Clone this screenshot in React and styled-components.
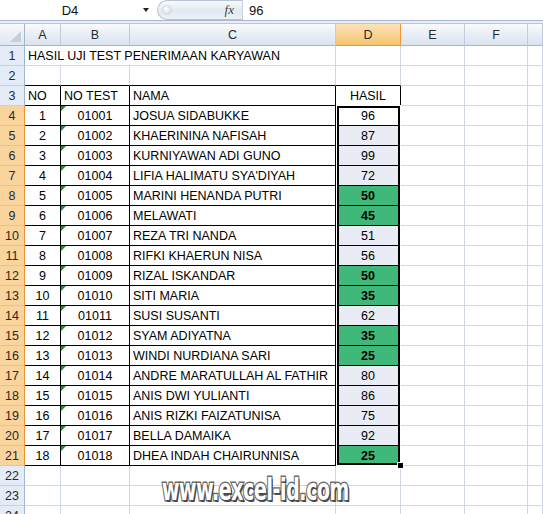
import React from 'react';
import styled, { createGlobalStyle, css } from 'styled-components';

const GlobalStyle = createGlobalStyle`
  html, body { margin: 0; padding: 0; background: #fff; }
  body { font-family: "Liberation Sans", Arial, sans-serif; }
`;

const Window = styled.div`
  position: relative;
  width: 543px;
  height: 514px;
  overflow: hidden;
  background: #fff;
  display: flex;
  flex-direction: column;
  & > * { flex-shrink: 0; }
`;

const FormulaBar = styled.div`
  height: 20px;
  display: flex;
  align-items: stretch;
  background: #fff;
  border-bottom: 1px solid #a9b8cc;
`;

const NameBox = styled.div`
  width: 140px;
  display: flex;
  align-items: center;
  justify-content: center;
  font-size: 13px;
  color: #111;
`;

const DropArrow = styled.div`
  width: 16px;
  display: flex;
  align-items: center;
  justify-content: flex-start;
  &::after {
    content: '';
    margin-left: 3px;
    border-style: solid;
    border-width: 4px 3.5px 0 3.5px;
    border-color: #222 transparent transparent transparent;
  }
`;

const FxPill = styled.div`
  width: 85px;
  margin-left: 1px;
  box-sizing: border-box;
  display: flex;
  align-items: center;
  justify-content: space-between;
  padding: 0 8px 0 4px;
  border-radius: 11px 0 0 11px;
  border: 1px solid #b4c3d6;
  border-right: none;
  background: linear-gradient(#f7f9fc, #e3e9f1 55%, #eef2f7);
`;

const Knob = styled.span`
  width: 8px;
  height: 8px;
  border-radius: 50%;
  background: radial-gradient(circle at 40% 35%, #fff, #c9d3df);
  border: 1px solid #d2dae4;
`;

const Fx = styled.span`
  font-family: "Liberation Serif", "Times New Roman", serif;
  font-style: italic;
  font-size: 13px;
  color: #444;
`;

const FormulaText = styled.div`
  flex: 1;
  display: flex;
  align-items: center;
  padding-left: 6px;
  font-size: 13px;
  color: #111;
  border-left: 1px solid #c5d1df;
`;

const Gap = styled.div`
  height: 2px;
  background: #e6edf6;
  border-bottom: 1px solid #b8c7da;
`;

const Sheet = styled.div`
  display: grid;
  grid-template-columns: 25px 36px 69px 206px 65px 64px 63px 1fr;
  grid-template-rows: 22px;
  grid-auto-rows: 20px;
`;

const placed = css`
  grid-row: ${p => p.$row};
  grid-column: ${p => p.$col} / span ${p => p.$span || 1};
`;

const Corner = styled.div`
  ${placed}
  box-sizing: border-box;
  position: relative;
  background: linear-gradient(#f7f9fc, #dfe6f0);
  border-right: 1px solid #9eb6ce;
  border-bottom: 1px solid #9eb6ce;
  &::after {
    content: '';
    position: absolute;
    right: 3px;
    bottom: 3px;
    border-style: solid;
    border-width: 0 0 11px 11px;
    border-color: transparent transparent #c5cfdc transparent;
  }
`;

const ColHead = styled.div`
  ${placed}
  box-sizing: border-box;
  display: flex;
  align-items: center;
  justify-content: center;
  font-size: 12.5px;
  color: #2a2a2a;
  border-right: 1px solid ${p => (p.$active ? '#f29536' : '#c1cddc')};
  border-bottom: 1px solid ${p => (p.$active ? '#f29536' : '#9eb6ce')};
  background: ${p =>
    p.$active
      ? 'linear-gradient(#fbe3b5, #f8d495 50%, #f4c46a)'
      : 'linear-gradient(#f9fbfd, #e8eef6 50%, #dae3ee)'};
`;

const RowHead = styled.div`
  ${placed}
  box-sizing: border-box;
  display: flex;
  align-items: center;
  justify-content: center;
  font-size: 12.5px;
  color: #2a2a2a;
  border-right: 1px solid ${p => (p.$active ? '#f29536' : '#9eb6ce')};
  border-bottom: 1px solid ${p => (p.$active ? '#f5c07a' : '#c5d2e2')};
  background: ${p => (p.$active ? '#f9d49c' : '#e4ecf7')};
`;

const Cell = styled.div`
  ${placed}
  box-sizing: border-box;
  position: relative;
  display: flex;
  align-items: center;
  justify-content: ${p => p.$align};
  padding: 1px 3px 0 3px;
  font-size: 12.5px;
  color: #000;
  white-space: nowrap;
  font-weight: ${p => (p.$bold ? 700 : 400)};
  background: ${p => p.$bg};
  border-right: 1px solid ${p => p.$r};
  border-bottom: 1px solid ${p => p.$b};
  ${p =>
    p.$flag &&
    css`
      &::before {
        content: '';
        position: absolute;
        left: 0;
        top: 0;
        border-style: solid;
        border-width: 5px 5px 0 0;
        border-color: #1f8b2f transparent transparent transparent;
      }
    `}
`;

const Selection = styled.div`
  grid-column: 5 / 6;
  grid-row: 5 / 23;
  margin: -1px 0 0 0;
  position: relative;
  pointer-events: none;
  box-shadow: inset 0 0 0 1px #fff, inset 0 0 0 3px #000;
  &::after {
    content: '';
    position: absolute;
    right: -3px;
    bottom: -3px;
    width: 5px;
    height: 5px;
    background: #000;
    border: 1px solid #fff;
  }
`;

const Watermark = styled.div`
  position: absolute;
  left: 162px;
  top: 472px;
  font-family: "DejaVu Sans Condensed", "DejaVu Sans", sans-serif;
  font-weight: 700;
  font-size: 30px;
  letter-spacing: -0.5px;
  color: #fff;
  transform: scaleX(0.7);
  transform-origin: left top;
  -webkit-text-stroke: 3px #6d6d6d;
  paint-order: stroke fill;
  text-shadow: 2px 2px 0 #4a4a4a;
  white-space: nowrap;
`;

const people = [
  ['JOSUA SIDABUKKE', 96],
  ['KHAERININA NAFISAH', 87],
  ['KURNIYAWAN ADI GUNO', 99],
  ["LIFIA HALIMATU SYA'DIYAH", 72],
  ['MARINI HENANDA PUTRI', 50],
  ['MELAWATI', 45],
  ['REZA TRI NANDA', 51],
  ['RIFKI KHAERUN NISA', 56],
  ['RIZAL ISKANDAR', 50],
  ['SITI MARIA', 35],
  ['SUSI SUSANTI', 62],
  ['SYAM ADIYATNA', 35],
  ['WINDI NURDIANA SARI', 25],
  ['ANDRE MARATULLAH AL FATHIR', 80],
  ['ANIS DWI YULIANTI', 86],
  ['ANIS RIZKI FAIZATUNISA', 75],
  ['BELLA DAMAIKA', 92],
  ['DHEA INDAH CHAIRUNNISA', 25],
];

const COLS = ['A', 'B', 'C', 'D', 'E', 'F', 'G'];
const ROWS = 24;
const GRID = '#d0d7e5';

const bordered = (r, c) => r >= 3 && r <= 21 && c >= 0 && c <= 3;

function cellContent(r, c) {
  if (r === 3) return ['NO', 'NO TEST', 'NAMA', 'HASIL'][c] || '';
  if (r >= 4 && r <= 21) {
    const i = r - 4;
    const [name, score] = people[i];
    if (c === 0) return String(i + 1);
    if (c === 1) return String(1001 + i).padStart(5, '0');
    if (c === 2) return name;
    if (c === 3) return String(score);
  }
  return '';
}

function alignOf(r, c) {
  if (r === 3) return c === 3 ? 'center' : 'flex-start';
  if (r >= 4 && r <= 21 && c !== 2) return 'center';
  return 'flex-start';
}

// sheet row r sits in grid row r + 1 (grid row 1 is the column header)
function renderRow(r) {
  const row = r + 1;
  const cells = [];
  const active = r >= 4 && r <= 21;
  cells.push(
    <RowHead key={`h${r}`} $row={row} $col={1} $active={active}>
      {r}
    </RowHead>
  );
  if (r === 1) {
    cells.push(
      <Cell key="a1" $row={row} $col={2} $span={3} $align="flex-start" $bg="#fff" $r={GRID} $b={GRID}>
        HASIL UJI TEST PENERIMAAN KARYAWAN
      </Cell>
    );
  }
  COLS.forEach((col, c) => {
    if (r === 1 && c < 3) return;
    const score = active ? people[r - 4][1] : null;
    const inD = active && c === 3;
    const green = inD && score <= 50;
    let bg = '#fff';
    if (inD) bg = green ? '#3fb87a' : r === 4 ? '#fff' : '#e9ebf5';
    cells.push(
      <Cell
        key={`${col}${r}`}
        $row={row}
        $col={c + 2}
        $align={alignOf(r, c)}
        $bg={bg}
        $bold={green}
        $flag={active && c === 1}
        $r={bordered(r, c) || bordered(r, c + 1) ? '#000' : GRID}
        $b={bordered(r, c) || bordered(r + 1, c) ? '#000' : GRID}
      >
        {cellContent(r, c)}
      </Cell>
    );
  });
  return cells;
}

export default function App() {
  return (
    <Window>
      <GlobalStyle />
      <FormulaBar>
        <NameBox>D4</NameBox>
        <DropArrow />
        <FxPill>
          <Knob />
          <Fx>fx</Fx>
        </FxPill>
        <FormulaText>96</FormulaText>
      </FormulaBar>
      <Gap />
      <Sheet>
        <Corner $row={1} $col={1} />
        {COLS.map((col, c) => (
          <ColHead key={col} $row={1} $col={c + 2} $active={col === 'D'}>
            {col === 'G' ? '' : col}
          </ColHead>
        ))}
        {Array.from({ length: ROWS }, (_, i) => renderRow(i + 1))}
        <Selection />
      </Sheet>
      <Watermark>www.excel-id.com</Watermark>
    </Window>
  );
}
